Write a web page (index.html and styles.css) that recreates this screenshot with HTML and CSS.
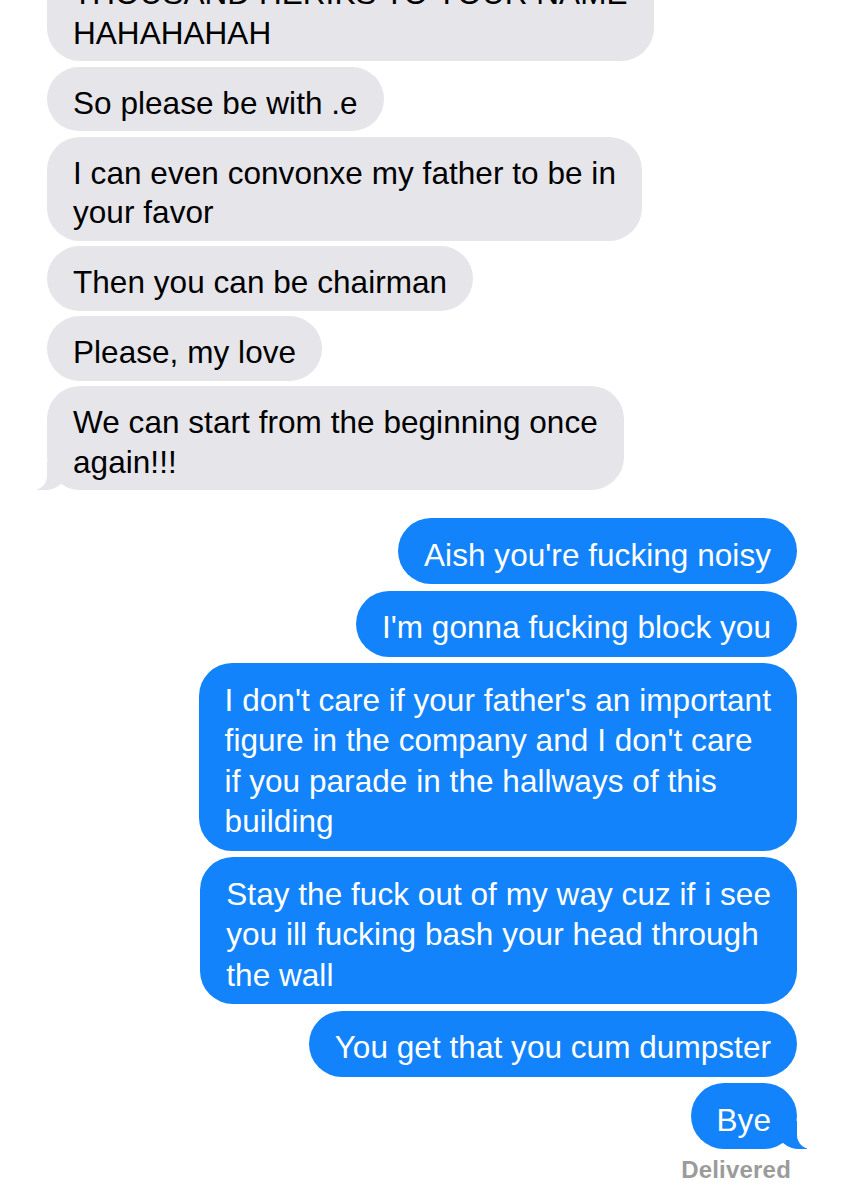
FILE: index.html
```html
<!DOCTYPE html>
<html lang="en">
<head>
<meta charset="utf-8">
<title>Messages</title>
<link rel="stylesheet" href="styles.css">
</head>
<body>
<main class="chat">
  <section class="group them">
    <div class="bubble">THOUSAND HERIKS TO YOUR NAME<br>HAHAHAHAH</div>
    <div class="bubble">So please be with .e</div>
    <div class="bubble">I can even convonxe my father to be in<br>your favor</div>
    <div class="bubble">Then you can be chairman</div>
    <div class="bubble">Please, my love</div>
    <div class="bubble tail">We can start from the beginning once<br>again!!!</div>
  </section>
  <section class="group me">
    <div class="bubble">Aish you're fucking noisy</div>
    <div class="bubble">I'm gonna fucking block you</div>
    <div class="bubble">I don't care if your father's an important<br>figure in the company and I don't care<br>if you parade in the hallways of this<br>building</div>
    <div class="bubble">Stay the fuck out of my way cuz if i see<br>you ill fucking bash your head through<br>the wall</div>
    <div class="bubble">You get that you cum dumpster</div>
    <div class="bubble tail">Bye</div>
    <div class="status">Delivered</div>
  </section>
</main>
</body>
</html>
```
FILE: styles.css
```css
html, body {
  margin: 0;
  padding: 0;
  background: #ffffff;
  overflow: hidden;
}

body {
  width: 845px;
  height: 1200px;
  font-family: "Liberation Sans", Arial, sans-serif;
}

.chat {
  display: flex;
  flex-direction: column;
  margin-top: -43px;
}

.group {
  display: flex;
  flex-direction: column;
}

.bubble {
  position: relative;
  font-size: 31.5px;
  letter-spacing: 0.05px;
  white-space: nowrap;
  border-radius: 33px;
  padding: 0 26px;
  box-sizing: border-box;
}

.them {
  align-items: flex-start;
  gap: 5.5px;
  padding-left: 47px;
}

.them .bubble {
  background: #e5e5ea;
  color: #000000;
  line-height: 39.5px;
  padding-top: 17px;
  padding-bottom: 8px;
}

.me {
  align-items: flex-end;
  gap: 6.5px;
  padding-right: 48px;
  margin-top: 28px;
}

.me .bubble {
  background: #1383fc;
  color: #ffffff;
  line-height: 40.5px;
  padding-top: 16.5px;
  padding-bottom: 9px;
}

/* bubble tails */
.them .tail::before {
  content: "";
  position: absolute;
  z-index: 0;
  bottom: 0;
  left: -10px;
  width: 30px;
  height: 28px;
  background: #e5e5ea;
  border-bottom-right-radius: 22px 20px;
}

.them .tail::after {
  content: "";
  position: absolute;
  z-index: 1;
  bottom: 0;
  left: -36px;
  width: 36px;
  height: 28px;
  background: #ffffff;
  border-bottom-right-radius: 14px;
}

.me .tail::before {
  content: "";
  position: absolute;
  z-index: 0;
  bottom: 0;
  right: -10px;
  width: 30px;
  height: 28px;
  background: #1383fc;
  border-bottom-left-radius: 22px 20px;
}

.me .tail::after {
  content: "";
  position: absolute;
  z-index: 1;
  bottom: 0;
  right: -36px;
  width: 36px;
  height: 28px;
  background: #ffffff;
  border-bottom-left-radius: 14px;
}

.status {
  margin-top: 0;
  margin-right: 6px;
  font-size: 24px;
  font-weight: 700;
  line-height: 28px;
  color: #9b9b9b;
  letter-spacing: 0.2px;
}
```
